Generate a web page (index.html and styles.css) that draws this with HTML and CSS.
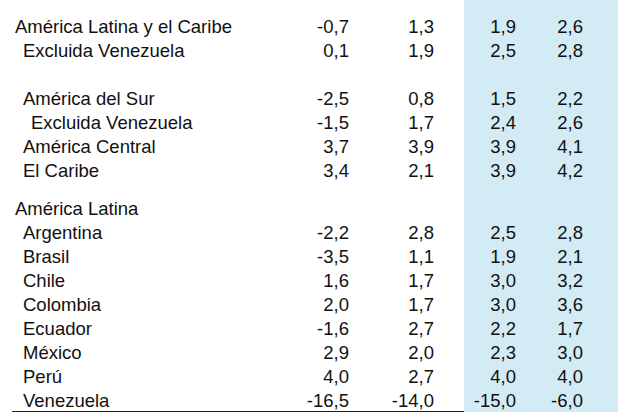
FILE: index.html
```html
<!DOCTYPE html>
<html lang="es">
<head>
<meta charset="utf-8">
<title>Proyecciones de crecimiento</title>
<link rel="stylesheet" href="styles.css">
</head>
<body>
<div class="table">
  <div class="row spacer-top"><span></span><span></span><span></span><span class="shade"></span><span class="shade end"></span></div>
  <div class="row"><span class="label l0">América Latina y el Caribe</span><span class="num">-0,7</span><span class="num gap">1,3</span><span class="num shade">1,9</span><span class="num shade end">2,6</span></div>
  <div class="row"><span class="label l1">Excluida Venezuela</span><span class="num">0,1</span><span class="num gap">1,9</span><span class="num shade">2,5</span><span class="num shade end">2,8</span></div>
  <div class="row blank"><span></span><span></span><span></span><span class="shade"></span><span class="shade end"></span></div>
  <div class="row"><span class="label l1">América del Sur</span><span class="num">-2,5</span><span class="num gap">0,8</span><span class="num shade">1,5</span><span class="num shade end">2,2</span></div>
  <div class="row"><span class="label l2">Excluida Venezuela</span><span class="num">-1,5</span><span class="num gap">1,7</span><span class="num shade">2,4</span><span class="num shade end">2,6</span></div>
  <div class="row"><span class="label l1">América Central</span><span class="num">3,7</span><span class="num gap">3,9</span><span class="num shade">3,9</span><span class="num shade end">4,1</span></div>
  <div class="row"><span class="label l1">El Caribe</span><span class="num">3,4</span><span class="num gap">2,1</span><span class="num shade">3,9</span><span class="num shade end">4,2</span></div>
  <div class="row blank-small"><span></span><span></span><span></span><span class="shade"></span><span class="shade end"></span></div>
  <div class="row"><span class="label l0">América Latina</span><span class="num"></span><span class="num gap"></span><span class="num shade"></span><span class="num shade end"></span></div>
  <div class="row"><span class="label l1">Argentina</span><span class="num">-2,2</span><span class="num gap">2,8</span><span class="num shade">2,5</span><span class="num shade end">2,8</span></div>
  <div class="row"><span class="label l1">Brasil</span><span class="num">-3,5</span><span class="num gap">1,1</span><span class="num shade">1,9</span><span class="num shade end">2,1</span></div>
  <div class="row"><span class="label l1">Chile</span><span class="num">1,6</span><span class="num gap">1,7</span><span class="num shade">3,0</span><span class="num shade end">3,2</span></div>
  <div class="row"><span class="label l1">Colombia</span><span class="num">2,0</span><span class="num gap">1,7</span><span class="num shade">3,0</span><span class="num shade end">3,6</span></div>
  <div class="row"><span class="label l1">Ecuador</span><span class="num">-1,6</span><span class="num gap">2,7</span><span class="num shade">2,2</span><span class="num shade end">1,7</span></div>
  <div class="row"><span class="label l1">México</span><span class="num">2,9</span><span class="num gap">2,0</span><span class="num shade">2,3</span><span class="num shade end">3,0</span></div>
  <div class="row"><span class="label l1">Perú</span><span class="num">4,0</span><span class="num gap">2,7</span><span class="num shade">4,0</span><span class="num shade end">4,0</span></div>
  <div class="row last"><span class="label l1">Venezuela</span><span class="num">-16,5</span><span class="num gap">-14,0</span><span class="num shade">-15,0</span><span class="num shade end">-6,0</span></div>
</div>
</body>
</html>
```

FILE: styles.css
```css
html, body {
  margin: 0;
  padding: 0;
  background: #ffffff;
}

body {
  width: 618px;
  height: 412px;
  overflow: hidden;
  font-family: "Liberation Sans", Arial, sans-serif;
  font-size: 18.5px;
  color: #111111;
}

.table {
  margin-left: 12px;
  border-bottom: 2px solid #222222;
}

.row {
  display: grid;
  grid-template-columns: 278px 59px 115px 52px 102px;
  height: 24px;
  line-height: 24px;
  white-space: nowrap;
}

.spacer-top {
  height: 15px;
}

.blank {
  height: 24px;
}

.blank-small {
  height: 14px;
}

.last {
  height: 22px;
}

.num {
  text-align: right;
}

.gap {
  padding-right: 30px;
}

.end {
  padding-right: 35px;
}

.shade {
  background: #d3ebf4;
}

.label.l0 {
  padding-left: 3px;
}

.label.l1 {
  padding-left: 11px;
}

.label.l2 {
  padding-left: 19px;
}
```
